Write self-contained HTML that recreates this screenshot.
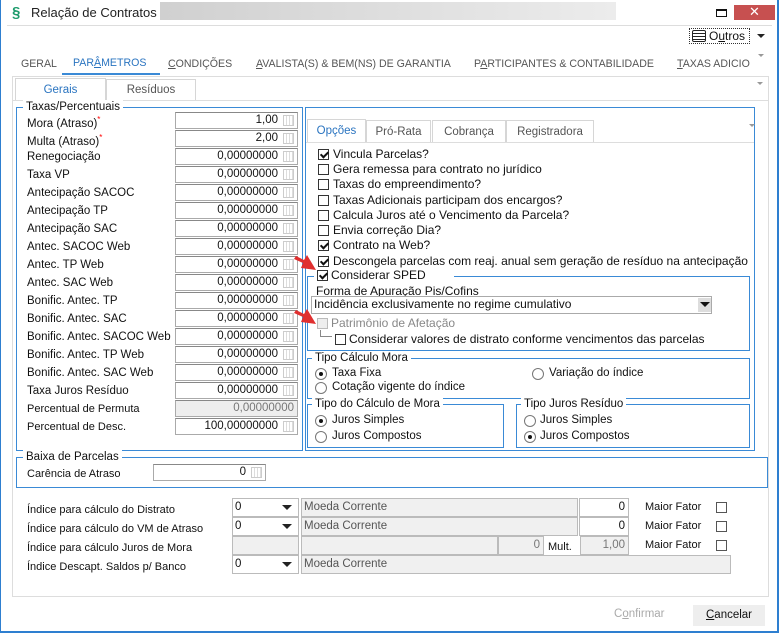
<!DOCTYPE html>
<html><head><meta charset="utf-8">
<style>
*{box-sizing:border-box;margin:0;padding:0}
body{width:779px;height:633px;position:relative;overflow:hidden;background:#fff;font-family:"Liberation Sans","DejaVu Sans",sans-serif;font-size:11.5px;color:#111}
.a{position:absolute;white-space:nowrap}
.r{font-size:12px}
.lbl{position:absolute;left:27px;font-size:11.5px}
.in{position:absolute;left:175px;width:123px;height:17px;border:1px solid #aaa;border-top-color:#888;background:#fff;text-align:right;padding-right:19px;line-height:15px;font-size:11.5px}
.in i{position:absolute;right:3px;top:2px;width:11px;height:11px;border:1px solid #ccc;background:repeating-linear-gradient(90deg,#fff 0 2px,#ddd 2px 3px),#eee}
.gb{position:absolute;border:1px solid #3a8ad6}
.gt{position:absolute;background:#fff;padding:0 3px;top:-8px;left:8px;font-size:11.5px;line-height:14px}
.cb{position:absolute;width:11px;height:11px;border:1px solid #333;background:#fff}
.cb.c::after{content:"";position:absolute;left:3px;top:0px;width:3px;height:6px;border:solid #111;border-width:0 2px 2px 0;transform:rotate(45deg)}
.rb{position:absolute;width:12px;height:12px;border:1px solid #777;border-radius:50%;background:#fff}
.rb.c::after{content:"";position:absolute;left:3px;top:3px;width:4px;height:4px;border-radius:50%;background:#111}
.tab{position:absolute;border:1px solid #d6d6d6;border-bottom:none;background:#fff;text-align:center;color:#555}
.fld{position:absolute;height:19px;border:1px solid #bbb;background:#f0f0f0;color:#555;line-height:16px;padding-left:2px;font-size:11.5px}
.nf{position:absolute;height:19px;border:1px solid #bbb;background:#fff;line-height:16px;text-align:right;padding-right:3px}
.dd{position:absolute;height:19px;border:1px solid #bbb;background:#fff;line-height:16px;padding-left:2px}
.dd::after{content:"";position:absolute;right:6px;top:6px;border:5px solid transparent;border-top:5px solid #222;border-bottom:none}
.mt{position:absolute;top:58px;font-size:10.6px;color:#555;white-space:nowrap}
</style></head><body>
<div class="a" style="left:0;top:0;width:779px;height:633px;border:1px solid #2e7fd0;border-width:0 2px 2px 1px"></div>
<div class="a" style="left:160px;top:2px;width:456px;height:18px;background:linear-gradient(90deg,#d0d0d0,#ececec)"></div>
<div class="a" style="left:12px;top:4px;font-size:15px;color:#1d9b6c;font-weight:bold">§</div>
<div class="a" style="left:31px;top:5px;font-size:13px;color:#222">Relação de Contratos</div>
<div class="a" style="left:716px;top:9px;width:11px;height:8px;border:1px solid #111;border-top-width:2px"></div>
<div class="a" style="left:734px;top:5px;width:41px;height:15px;background:#c75050;color:#fff;text-align:center;font-size:13px;line-height:14px;font-weight:bold">✕</div>
<div class="a" style="left:7px;top:25px;width:765px;height:1px;background:#ddd"></div>
<div class="a" style="left:689px;top:28px;width:61px;height:16px;border:1px dotted #333"></div>
<div class="a" style="left:692px;top:30px;width:14px;height:12px;border:1px solid #222;border-radius:2px;background:repeating-linear-gradient(180deg,#fff 0 2px,#222 2px 3px)"></div>
<div class="a" style="left:709px;top:29px;font-size:12px">O<u>u</u>tros</div>
<div class="a" style="left:757px;top:34px;border:4px solid transparent;border-top:4px solid #222"></div>
<div class="mt" style="left:21px">GERAL</div>
<div class="mt" style="left:73px;top:57px;color:#2a74c0">PAR<u>Â</u>METROS</div>
<div class="a" style="left:62px;top:73px;width:98px;height:2px;background:#3a8ad6"></div>
<div class="mt" style="left:168px"><u>C</u>ONDIÇÕES</div>
<div class="mt" style="left:256px"><u>A</u>VALISTA(S) &amp; BEM(NS) DE GARANTIA</div>
<div class="mt" style="left:474px">P<u>A</u>RTICIPANTES &amp; CONTABILIDADE</div>
<div class="mt" style="left:677px"><u>T</u>AXAS ADICIO</div>
<div class="a" style="left:758px;top:54px;border:3px solid transparent;border-top:3px solid #999"></div>
<div class="a" style="left:12px;top:76px;width:757px;height:521px;border:1px solid #ddd"></div>
<div class="tab" style="left:15px;top:78px;width:91px;height:23px;line-height:22px;color:#2a74c0">Gerais</div>
<div class="tab" style="left:106px;top:79px;width:90px;height:22px;line-height:21px">Resíduos</div>
<div class="a" style="left:12px;top:100px;width:757px;height:1px;background:#ddd"></div>
<div class="a" style="left:757px;top:82px;border:3px solid transparent;border-top:3px solid #999"></div>

<div class="gb" style="left:16px;top:107px;width:287px;height:344px"><div class="gt" style="left:6px">Taxas/Percentuais</div></div>
<div class="lbl" style="top:115px">Mora (Atraso)<sup style="color:red;font-size:8px">*</sup></div><div class="in" style="top:112px">1,00<i></i></div>
<div class="lbl" style="top:133px">Multa (Atraso)<sup style="color:red;font-size:8px">*</sup></div><div class="in" style="top:130px">2,00<i></i></div>
<div class="lbl" style="top:151px">Renegociação</div><div class="in" style="top:148px">0,00000000<i></i></div>
<div class="lbl" style="top:169px">Taxa VP</div><div class="in" style="top:166px">0,00000000<i></i></div>
<div class="lbl" style="top:187px">Antecipação SACOC</div><div class="in" style="top:184px">0,00000000<i></i></div>
<div class="lbl" style="top:205px">Antecipação TP</div><div class="in" style="top:202px">0,00000000<i></i></div>
<div class="lbl" style="top:223px">Antecipação SAC</div><div class="in" style="top:220px">0,00000000<i></i></div>
<div class="lbl" style="top:241px">Antec. SACOC Web</div><div class="in" style="top:238px">0,00000000<i></i></div>
<div class="lbl" style="top:259px">Antec. TP Web</div><div class="in" style="top:256px">0,00000000<i></i></div>
<div class="lbl" style="top:277px">Antec. SAC Web</div><div class="in" style="top:274px">0,00000000<i></i></div>
<div class="lbl" style="top:295px">Bonific. Antec. TP</div><div class="in" style="top:292px">0,00000000<i></i></div>
<div class="lbl" style="top:313px">Bonific. Antec. SAC</div><div class="in" style="top:310px">0,00000000<i></i></div>
<div class="lbl" style="top:331px">Bonific. Antec. SACOC Web</div><div class="in" style="top:328px">0,00000000<i></i></div>
<div class="lbl" style="top:349px">Bonific. Antec. TP Web</div><div class="in" style="top:346px">0,00000000<i></i></div>
<div class="lbl" style="top:367px">Bonific. Antec. SAC Web</div><div class="in" style="top:364px">0,00000000<i></i></div>
<div class="lbl" style="top:385px">Taxa Juros Resíduo</div><div class="in" style="top:382px">0,00000000<i></i></div>
<div class="lbl" style="top:403px;font-size:11px">Percentual de Permuta</div><div class="in" style="top:400px;background:#eee;color:#777;padding-right:3px">0,00000000</div>
<div class="lbl" style="top:421px;font-size:11px">Percentual de Desc.</div><div class="in" style="top:418px">100,00000000<i></i></div>

<div class="gb" style="left:305px;top:107px;width:450px;height:344px"></div>
<div class="tab" style="left:307px;top:119px;width:59px;height:24px;line-height:23px;color:#2a74c0">Opções</div>
<div class="tab" style="left:366px;top:120px;width:65px;height:23px;line-height:22px">Pró-Rata</div>
<div class="tab" style="left:432px;top:120px;width:74px;height:23px;line-height:22px">Cobrança</div>
<div class="tab" style="left:506px;top:120px;width:88px;height:23px;line-height:22px">Registradora</div>
<div class="a" style="left:306px;top:142px;width:448px;height:1px;background:#ddd"></div>
<div class="a" style="left:749px;top:124px;border:3px solid transparent;border-top:3px solid #999"></div>

<div class="cb c" style="left:318px;top:149px"></div><div class="a r" style="left:333px;top:147px">Vincula Parcelas?</div>
<div class="cb" style="left:318px;top:164px"></div><div class="a r" style="left:333px;top:162px">Gera remessa para contrato no jurídico</div>
<div class="cb" style="left:318px;top:179px"></div><div class="a r" style="left:333px;top:177px">Taxas do empreendimento?</div>
<div class="cb" style="left:318px;top:195px"></div><div class="a r" style="left:333px;top:193px">Taxas Adicionais participam dos encargos?</div>
<div class="cb" style="left:318px;top:210px"></div><div class="a r" style="left:333px;top:208px">Calcula Juros até o Vencimento da Parcela?</div>
<div class="cb" style="left:318px;top:225px"></div><div class="a r" style="left:333px;top:223px">Envia correção Dia?</div>
<div class="cb c" style="left:318px;top:240px"></div><div class="a r" style="left:333px;top:238px">Contrato na Web?</div>
<div class="cb c" style="left:318px;top:256px"></div><div class="a r" style="left:333px;top:254px">Descongela parcelas com reaj. anual sem geração de resíduo na antecipação</div>

<div class="gb" style="left:307px;top:276px;width:443px;height:75px"></div>
<div class="a" style="left:314px;top:269px;width:140px;height:14px;background:#fff"></div>
<div class="cb c" style="left:317px;top:270px"></div><div class="a r" style="left:331px;top:268px">Considerar SPED</div>
<div class="a r" style="left:316px;top:284px">Forma de Apuração Pis/Cofins</div>
<div class="a r" style="left:311px;top:296px;width:401px;height:18px;border:1px solid #aaa;background:#fff;line-height:15px;padding-left:2px">Incidência exclusivamente no regime cumulativo</div>
<div class="a" style="left:698px;top:298px;width:13px;height:14px;background:#ddd"></div>
<div class="a" style="left:700px;top:302px;border:5px solid transparent;border-top:5px solid #111;border-bottom:none"></div>
<div class="cb" style="left:317px;top:318px;border-color:#bbb;background:#eee"></div><div class="a r" style="left:331px;top:316px;color:#888">Patrimônio de Afetação</div>
<div class="a" style="left:320px;top:330px;width:12px;height:7px;border-left:1px solid #888;border-bottom:1px solid #888"></div>
<div class="cb" style="left:335px;top:334px"></div><div class="a r" style="left:349px;top:332px">Considerar valores de distrato conforme vencimentos das parcelas</div>

<div class="gb" style="left:307px;top:358px;width:443px;height:41px"><div class="gt" style="left:4px">Tipo Cálculo Mora</div></div>
<div class="rb c" style="left:315px;top:368px"></div><div class="a" style="left:332px;top:367px">Taxa Fixa</div>
<div class="rb" style="left:532px;top:368px"></div><div class="a" style="left:549px;top:367px">Variação do índice</div>
<div class="rb" style="left:315px;top:382px"></div><div class="a" style="left:332px;top:381px">Cotação vigente do índice</div>

<div class="gb" style="left:307px;top:404px;width:197px;height:44px"><div class="gt" style="left:4px">Tipo do Cálculo de Mora</div></div>
<div class="rb c" style="left:315px;top:415px"></div><div class="a" style="left:332px;top:414px">Juros Simples</div>
<div class="rb" style="left:315px;top:431px"></div><div class="a" style="left:332px;top:430px">Juros Compostos</div>
<div class="gb" style="left:516px;top:404px;width:234px;height:44px"><div class="gt" style="left:4px">Tipo Juros Resíduo</div></div>
<div class="rb" style="left:524px;top:415px"></div><div class="a" style="left:540px;top:414px">Juros Simples</div>
<div class="rb c" style="left:524px;top:431px"></div><div class="a" style="left:540px;top:430px">Juros Compostos</div>

<svg class="a" style="left:292px;top:250px" width="30" height="80"><g fill="#e03030">
<path d="M4 6 L12 10 L15 5 L24 20 L9 18 L11 13 L2 9Z"/>
<path d="M4 60 L12 64 L15 59 L24 74 L9 72 L11 67 L2 63Z"/></g></svg>

<div class="gb" style="left:16px;top:457px;width:752px;height:31px"><div class="gt" style="left:6px">Baixa de Parcelas</div></div>
<div class="lbl" style="top:468px;font-size:11px">Carência de Atraso</div>
<div class="in" style="left:153px;top:464px;width:113px">0<i></i></div>

<div class="lbl" style="top:504px;font-size:11px">Índice para cálculo do Distrato</div>
<div class="dd" style="left:232px;top:498px;width:67px">0</div>
<div class="fld" style="left:301px;top:498px;width:277px">Moeda Corrente</div>
<div class="nf" style="left:579px;top:498px;width:50px">0</div>
<div class="a" style="left:645px;top:501px;font-size:11px">Maior Fator</div><div class="cb" style="left:716px;top:502px;border-color:#555"></div>

<div class="lbl" style="top:523px;font-size:11px">Índice para cálculo do VM de Atraso</div>
<div class="dd" style="left:232px;top:517px;width:67px">0</div>
<div class="fld" style="left:301px;top:517px;width:277px">Moeda Corrente</div>
<div class="nf" style="left:579px;top:517px;width:50px">0</div>
<div class="a" style="left:645px;top:520px;font-size:11px">Maior Fator</div><div class="cb" style="left:716px;top:521px;border-color:#555"></div>

<div class="lbl" style="top:542px;font-size:11px">Índice para cálculo Juros de Mora</div>
<div class="fld" style="left:232px;top:536px;width:67px"></div>
<div class="fld" style="left:301px;top:536px;width:197px"></div>
<div class="fld" style="left:498px;top:536px;width:46px;text-align:right;padding-right:3px;color:#777">0</div>
<div class="a" style="left:548px;top:541px;font-size:11px">Mult.</div>
<div class="fld" style="left:580px;top:536px;width:49px;text-align:right;padding-right:3px;color:#777">1,00</div>
<div class="a" style="left:645px;top:539px;font-size:11px">Maior Fator</div><div class="cb" style="left:716px;top:540px;border-color:#555"></div>

<div class="lbl" style="top:561px;font-size:11px">Índice Descapt. Saldos p/ Banco</div>
<div class="dd" style="left:232px;top:555px;width:67px">0</div>
<div class="fld" style="left:301px;top:555px;width:430px">Moeda Corrente</div>

<div class="a" style="left:614px;top:608px;color:#aaa;font-size:11.5px">C<u>o</u>nfirmar</div>
<div class="a" style="left:693px;top:605px;width:72px;height:21px;background:#eee;text-align:center;line-height:21px;font-size:11.5px"><u>C</u>ancelar</div>
</body></html>
